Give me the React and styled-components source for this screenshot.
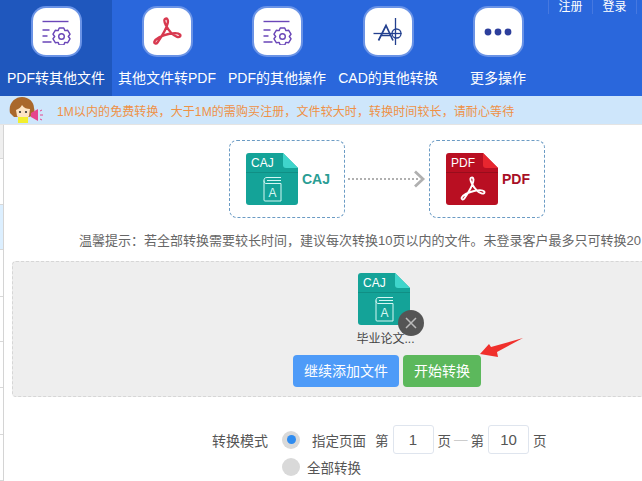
import React from 'react';
import styled, { createGlobalStyle } from 'styled-components';

const Global = createGlobalStyle`
  html, body { margin: 0; padding: 0; background: #fff; }
  body { font-family: "Liberation Sans", "Noto Sans CJK SC", sans-serif; }
`;

const Page = styled.div`
  width: 642px;
  height: 481px;
  overflow: hidden;
  display: flex;
  flex-direction: column;
`;

const Header = styled.div`
  height: 96px;
  flex: none;
  background: #2a67dc;
  display: flex;
  position: relative;
`;

const Tab = styled.div`
  width: ${p => p.$w}px;
  flex: none;
  display: flex;
  flex-direction: column;
  align-items: center;
  padding-top: 8px;
  box-sizing: border-box;
  background: ${p => (p.$active ? '#1f57bd' : 'transparent')};
`;

const IconTile = styled.div`
  width: 47px;
  height: 47px;
  background: #fff;
  border-radius: 13px;
  box-shadow: 0 0 0 2px #6a93e6;
  display: flex;
  align-items: center;
  justify-content: center;
`;

const TabLabel = styled.div`
  margin-top: 13px;
  color: #fff;
  font-size: 14px;
  line-height: 20px;
  white-space: nowrap;
`;

const UserLinks = styled.div`
  position: absolute;
  top: 0;
  right: 5px;
  display: flex;
  border-right: 1px solid #4678e0;
  height: 14px;
`;

const UserLink = styled.div`
  width: 43px;
  height: 14px;
  font-size: 12px;
  line-height: 14px;
  color: #fff;
  text-align: center;
  border-left: 1px solid #4678e0;
`;

const Notice = styled.div`
  height: 29px;
  flex: none;
  background: #cee6fb;
  display: flex;
  align-items: center;
  padding-left: 9px;
  gap: 14px;
  border-bottom: 1px solid #e4e4e4;
  box-sizing: border-box;
`;

const NoticeText = styled.div`
  font-size: 12px;
  letter-spacing: 0.1px;
  color: #ef9146;
  white-space: nowrap;
`;

const Body = styled.div`
  flex: 1;
  display: flex;
  min-height: 0;
`;

const SideStrip = styled.div`
  width: 3px;
  flex: none;
  border-right: 1px solid #d4d4d4;
  display: flex;
  flex-direction: column;
`;

const SideCell = styled.div`
  height: ${p => p.$h}px;
  flex: none;
  background: ${p => p.$bg || '#ffffff'};
  border-bottom: 1px solid #d8d8d8;
  box-sizing: border-box;
`;

const Main = styled.div`
  flex: 1;
  min-width: 0;
  display: flex;
  flex-direction: column;
  padding: 15px 0 0 8px;
`;

const FormatRow = styled.div`
  display: flex;
  align-items: center;
  margin-left: 217px;
`;

const FormatBox = styled.div`
  width: 116px;
  height: 78px;
  box-sizing: border-box;
  border: 1px dashed #6b9bc4;
  border-radius: 8px;
  display: flex;
  align-items: center;
  padding-left: 16px;
  gap: 4px;
`;

const FormatName = styled.span`
  font-size: 14px;
  font-weight: 700;
  color: ${p => p.$color};
`;

const Arrow = styled.div`
  width: 84px;
  display: flex;
  justify-content: center;
`;

const Tip = styled.div`
  margin: 14px 0 0 67px;
  font-size: 13px;
  line-height: 18px;
  color: #666;
  white-space: nowrap;
`;

const DropZone = styled.div`
  width: 660px;
  height: 136px;
  flex: none;
  margin-top: 11px;
  box-sizing: border-box;
  background: #eeeeee;
  border: 1px dashed #d6d6d6;
  border-radius: 4px;
  display: flex;
  flex-direction: column;
  padding: 11px 0 0 280px;
`;

const FileItem = styled.div`
  width: 60px;
  margin-left: 61px;
  display: flex;
  flex-direction: column;
  align-items: center;
  position: relative;
`;

const FileName = styled.div`
  font-size: 12px;
  line-height: 14px;
  margin: 7px 0 0 3px;
  color: #444;
  white-space: nowrap;
`;

const RemoveBadge = styled.div`
  position: absolute;
  left: 44px;
  top: 37px;
  width: 26px;
  height: 26px;
  border-radius: 50%;
  background: #555;
  display: flex;
  align-items: center;
  justify-content: center;
`;

const Buttons = styled.div`
  display: flex;
  gap: 4px;
  margin-top: 9px;
  position: relative;
`;

const Button = styled.div`
  height: 32px;
  width: ${p => p.$w}px;
  border-radius: 4px;
  background: ${p => p.$bg};
  color: #fff;
  font-size: 14px;
  line-height: 32px;
  text-align: center;
`;

const RedArrow = styled.svg`
  position: absolute;
  left: 185px;
  top: -20px;
`;

const ModeRow = styled.div`
  display: flex;
  align-items: center;
  height: 30px;
  margin: ${p => p.$top}px 0 0 ${p => p.$left}px;
  font-size: 13.5px;
  color: #555;
  white-space: nowrap;
`;

const ModeLabel = styled.span`
  font-size: 14px;
  width: 70px;
`;

const Radio = styled.span`
  width: 18px;
  height: 18px;
  border-radius: 50%;
  background: #d9d9d9;
  flex: none;
  display: flex;
  align-items: center;
  justify-content: center;
  margin-right: ${p => p.$gap}px;
  &::after {
    content: '';
    width: 9px;
    height: 9px;
    border-radius: 50%;
    background: ${p => (p.$on ? '#2f8cf0' : 'transparent')};
  }
`;

const Spacer = styled.span`
  width: 9px;
`;

const PageInput = styled.div`
  width: 41px;
  height: 29px;
  box-sizing: border-box;
  border: 1px solid #dfe5ee;
  border-radius: 3px;
  margin: 0 4px;
  font-size: 15px;
  line-height: 28px;
  text-align: center;
  color: #555;
  background: #fff;
`;

const Dash = styled.span`
  color: #ccc;
  margin: 0 3px;
`;

// six lobed gear outline, centre (cx, cy)
const gearPath = (cx, cy, outer, inner) => {
  const pt = (r, deg) => {
    const a = (deg * Math.PI) / 180;
    return `${(cx + r * Math.cos(a)).toFixed(2)} ${(cy + r * Math.sin(a)).toFixed(2)}`;
  };
  const parts = [];
  for (let i = 0; i < 6; i++) {
    const a = i * 60 - 90;
    parts.push(pt(inner, a - 30), pt(outer, a - 15), pt(outer, a + 15));
  }
  return `M${parts.join('L')}Z`;
};

const SettingsIcon = () => (
  <svg width="30" height="26" viewBox="0 0 30 26" fill="none" stroke="#6a46b8" strokeWidth="1.4">
    <path d="M1.500 2.500h26" />
    <path d="M1.500 11h7M1.500 17h5M1.500 23h9" />
    <path d={gearPath(20.5, 17.5, 8.8, 6.8)} strokeLinejoin="round" />
    <circle cx="20.500" cy="17.500" r="2.800" />
  </svg>
);

const AcrobatGlyph = ({ color, size, width }) => (
  <svg width={size} height={size} viewBox="0 0 30 30" fill="none" stroke={color} strokeWidth={width} strokeLinejoin="round">
    <path d="M13 2c2-1.200 3.600.8 2.600 4.500C14.400 11.500 10 19 5.500 25.500c-1.400 2-3.700 1-3-1 1-2.400 7-6 14-7.500 4.500-1 10-1.200 11.500.6 1.200 1.500-.5 3-3 2.200-3.500-1.200-8-5.800-11-11.300C12.500 5.500 11.800 2.800 13 2z" />
  </svg>
);

const CadIcon = () => (
  <svg width="30" height="32" viewBox="0 0 30 32" fill="none" stroke="#23408f" strokeWidth="1.300">
    <path d="M.5 17.500h28" />
    <path d="M5.500 24.500 13 9.500l7 15M8.500 19.500h9" strokeWidth="1.700" />
    <path d="M22.500 2v27" />
    <circle cx="23.500" cy="17.500" r="4.500" />
  </svg>
);

const DotsIcon = () => (
  <svg width="28" height="8" viewBox="0 0 28 8" fill="#2d3f9c">
    <circle cx="4" cy="4" r="3.400" />
    <circle cx="14" cy="4" r="3.400" />
    <circle cx="24" cy="4" r="3.400" />
  </svg>
);

const Mascot = () => (
  <svg width="34" height="26" viewBox="0 0 34 26">
    <path d="M1 16C-1 6 6 0 13 0c7 0 12 5 12 11 1 3 0 6-2 8l-3 1H5z" fill="#a9682c" />
    <path d="M7 13c3-1 5-3 6-5 2 3 5 4 8 4l-1 7c-2 4-10 4-12 0z" fill="#fde4c4" />
    <circle cx="11" cy="15" r="1.100" fill="#333" />
    <circle cx="17" cy="15" r="1.100" fill="#333" />
    <path d="M9 20h10v6H9z" fill="#f2ee2e" />
    <path d="M22 16l7-4v12l-7-4z" fill="#e6458e" />
    <path d="M31 14l2-1M31 18h3M31 22l2 1" stroke="#e6458e" strokeWidth="1" />
  </svg>
);

const CajFile = () => (
  <svg width="52" height="52" viewBox="0 0 52 52">
    <path d="M3 0h34l15 15v34a3 3 0 0 1-3 3H3a3 3 0 0 1-3-3V3a3 3 0 0 1 3-3z" fill="#14a398" />
    <path d="M37 0l15 15H40a3 3 0 0 1-3-3z" fill="#3fd5cb" />
    <path d="M0 19.500h52" stroke="#0f8a80" strokeWidth="0.8" />
    <text x="5" y="14" fontSize="12" fill="#fff" fontFamily="Liberation Sans, sans-serif">CAJ</text>
    <g fill="none" stroke="#d5f7f3" strokeWidth="1">
      <path d="M21 24.500h14M21 27.500h14M18 27c0-1.500 1-2.500 3-2.500M18 27v20a1 1 0 0 0 1 1h16V30.500H20c-1 0-2-1-2-3" />
    </g>
    <text x="26.500" y="44" fontSize="12" textAnchor="middle" fill="#d5f7f3" fontFamily="Liberation Sans, sans-serif">A</text>
  </svg>
);

const PdfFile = () => (
  <svg width="52" height="52" viewBox="0 0 52 52">
    <path d="M3 0h34l15 15v34a3 3 0 0 1-3 3H3a3 3 0 0 1-3-3V3a3 3 0 0 1 3-3z" fill="#b90f22" />
    <path d="M37 0l15 15H40a3 3 0 0 1-3-3z" fill="#e8262f" />
    <path d="M0 19.500h52" stroke="#8f0c1a" strokeWidth="0.8" />
    <text x="5" y="14" fontSize="12" fill="#fff" fontFamily="Liberation Sans, sans-serif">PDF</text>
    <g transform="translate(13.500 23) scale(0.88)">
      <path d="M13 2c2-1.200 3.600.8 2.600 4.500C14.400 11.500 10 19 5.500 25.500c-1.400 2-3.700 1-3-1 1-2.400 7-6 14-7.500 4.500-1 10-1.200 11.500.6 1.200 1.500-.5 3-3 2.200-3.500-1.200-8-5.800-11-11.300C12.500 5.500 11.800 2.800 13 2z" fill="none" stroke="#fff" strokeWidth="2.200" />
    </g>
  </svg>
);

const tabs = [
  { label: 'PDF转其他文件', icon: <SettingsIcon />, w: 112, active: true },
  { label: '其他文件转PDF', icon: <AcrobatGlyph color="#d8394f" size={30} width={2.4} />, w: 110 },
  { label: 'PDF的其他操作', icon: <SettingsIcon />, w: 110 },
  { label: 'CAD的其他转换', icon: <CadIcon />, w: 112 },
  { label: '更多操作', icon: <DotsIcon />, w: 108 },
];

const sideCells = [
  { h: 34, bg: '#efefef' }, { h: 46 }, { h: 45, bg: '#dcefff' }, { h: 47 }, { h: 45 }, { h: 46 }, { h: 47 }, { h: 46 },
];

export default function App() {
  return (
    <Page>
      <Global />
      <Header>
        {tabs.map(t => (
          <Tab key={t.label} $w={t.w} $active={t.active}>
            <IconTile>{t.icon}</IconTile>
            <TabLabel>{t.label}</TabLabel>
          </Tab>
        ))}
        <UserLinks>
          <UserLink>注册</UserLink>
          <UserLink>登录</UserLink>
        </UserLinks>
      </Header>
      <Notice>
        <Mascot />
        <NoticeText>1M以内的免费转换，大于1M的需购买注册，文件较大时，转换时间较长，请耐心等待</NoticeText>
      </Notice>
      <Body>
        <SideStrip>
          {sideCells.map((c, i) => (
            <SideCell key={i} $h={c.h} $bg={c.bg} />
          ))}
        </SideStrip>
        <Main>
          <FormatRow>
            <FormatBox>
              <CajFile />
              <FormatName $color="#2a9d94">CAJ</FormatName>
            </FormatBox>
            <Arrow>
              <svg width="78" height="18" viewBox="0 0 78 18" fill="none" stroke="#b0b0b0">
                <path d="M0 9h72" strokeWidth="2" strokeDasharray="2 2" />
                <path d="M67 1.500l8 7.500-8 7.500" strokeWidth="2.800" />
              </svg>
            </Arrow>
            <FormatBox>
              <PdfFile />
              <FormatName $color="#a80f25">PDF</FormatName>
            </FormatBox>
          </FormatRow>
          <Tip>温馨提示：若全部转换需要较长时间，建议每次转换10页以内的文件。未登录客户最多只可转换20</Tip>
          <DropZone>
            <FileItem>
              <CajFile />
              <FileName>毕业论文...</FileName>
              <RemoveBadge>
                <svg width="14" height="14" viewBox="0 0 14 14" stroke="#bbb" strokeWidth="1.500">
                  <path d="M2 2l10 10M12 2L2 12" />
                </svg>
              </RemoveBadge>
            </FileItem>
            <Buttons>
              <Button $w={106} $bg="#4e9bf8">继续添加文件</Button>
              <Button $w={78} $bg="#5cb85c">开始转换</Button>
              <RedArrow width="46" height="22" viewBox="0 0 46 22">
                <path d="M2 19L11 9l2 3L45 3 19 17l1 5z" fill="#f0302c" />
              </RedArrow>
            </Buttons>
          </DropZone>
          <ModeRow $top={28} $left={200}>
            <ModeLabel>转换模式</ModeLabel>
            <Radio $on $gap={12} />
            指定页面<Spacer />第
            <PageInput>1</PageInput>
            页<Dash>—</Dash>第
            <PageInput>10</PageInput>
            页
          </ModeRow>
          <ModeRow $top={-1} $left={270}>
            <Radio $gap={7} />
            全部转换
          </ModeRow>
        </Main>
      </Body>
    </Page>
  );
}
